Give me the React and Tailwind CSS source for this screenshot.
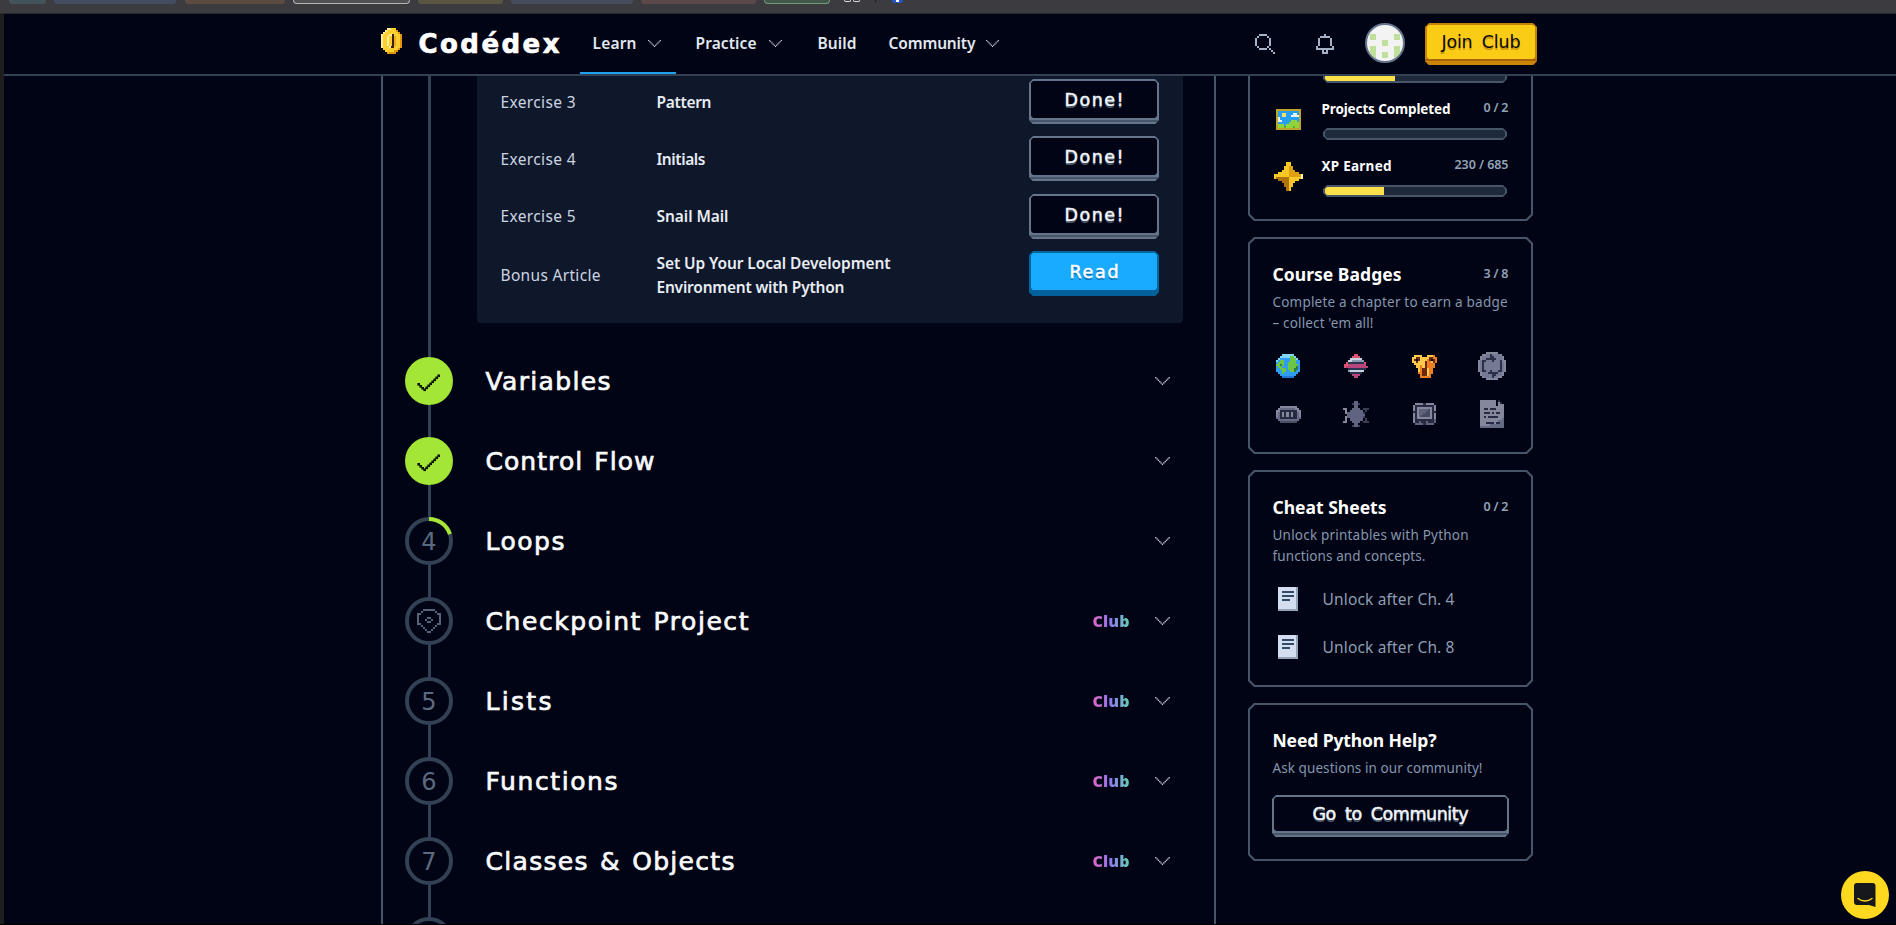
import { useLayoutEffect, useRef } from "react";

/* Text set to a fixed measure: tracking is computed so the line fills `w` pixels. */
function Fit({ w, className = "", children }) {
  const ref = useRef(null);
  useLayoutEffect(() => {
    const el = ref.current;
    const natural = el.getBoundingClientRect().width;
    el.style.letterSpacing = (w - 1 - natural) / Math.max(1, el.textContent.length - 1) + "px";
  }, [w]);
  return (
    <span className={"block shrink-0 " + className} style={{ width: w }}>
      <span ref={ref} className="ml-[0.5px] inline-block whitespace-nowrap">
        {children}
      </span>
    </span>
  );
}

/* Sprite drawn from rows of palette characters. */
function Sprite({ rows, colors, w, h, className = "" }) {
  const cols = rows[0].length;
  return (
    <svg
      width={w}
      height={h}
      viewBox={`0 0 ${cols} ${rows.length}`}
      preserveAspectRatio="none"
      shapeRendering="crispEdges"
      className={"block shrink-0 " + className}
    >
      {rows.flatMap((row, y) =>
        [...row].map((c, x) =>
          colors[c] ? <rect key={x + "-" + y} x={x} y={y} width="1" height="1" fill={colors[c]} /> : null
        )
      )}
    </svg>
  );
}

const COIN = [
  "...wwyyy...",
  "..wyyyyyo..",
  ".wyyyyyyyo.",
  "wyyywwkyyyo",
  "wyywyykbyyo",
  "wyywyykbyyo",
  "wyywyykbyyo",
  "wyywyykbyyo",
  "wyywyykbyyo",
  "wyyywkkyyyo",
  ".yyyyyyyyo.",
  "..yyyyyoo..",
  "...ooooo...",
];
const SEARCH = [
  "..####....",
  ".#....#...",
  "#......#..",
  "#......#..",
  "#......#..",
  "#......#..",
  ".#....#...",
  "..####.#..",
  "........#.",
  ".........#",
];
const BELL = [
  "....#....",
  "..#####..",
  ".#.....#.",
  ".#.....#.",
  ".#.....#.",
  ".#.....#.",
  "#.......#",
  "#########",
  "...#.#...",
  "...###...",
];
const PIN = [
  "...######...",
  "..#......#..",
  "##........##",
  "#..........#",
  "#....##....#",
  "#...#..#...#",
  "#....##....#",
  "##........##",
  "..#......#..",
  "...#....#...",
  "....#..#....",
  ".....##.....",
];
const PICTURE = [
  "gggggggggggg",
  "gbbbbbbbbbbg",
  "gbbyybbbwwbg",
  "gbbyybbwwwwg",
  "gwbbbbbbbbbg",
  "gwwbbbblllbg",
  "gbbbbblllllg",
  "glllbllllllg",
  "gllldllldllg",
  "gggggggggggg",
];
const STAR = [
  "......yy......",
  "......yy......",
  ".....yyoo.....",
  ".....yyoo.....",
  "....yyyooo....",
  "..yyyyyooooo..",
  "yyyyyyyoooooow",
  "yddddddyyyyyyw",
  "..dddddyyyyy..",
  "....dddyyy....",
  ".....ddyy.....",
  ".....ddyy.....",
  "......dy......",
  "......dy......",
];
const EARTH = [
  "...cccccc...",
  "..cccccggc..",
  ".cbbbbbgggc.",
  "cbggbbbgggbb",
  "bgggbbggggbb",
  "ggdgbbgggggb",
  "bggbbbggggdb",
  "bbgggbgggddb",
  "bbbggbbggdbb",
  ".bbgbbbbbbb.",
  "..bbbbbbbb..",
  "...uuuuuu...",
];
const PLANET = [
  ".....rr.....",
  "....rrrr....",
  "...wwwwww...",
  "..wwssssss..",
  ".rkkkkkkkkr.",
  "rrppppppppp.",
  "rppppppppppp",
  "..kkkkkkkkk.",
  "..swwwwwww..",
  "...kkkkkk...",
  "....pppp....",
  ".....pp.....",
];
const LION = [
  ".yyyy..yyyo.",
  "yykkyyyykkoo",
  "yk.kyyyok.ko",
  "yykyyykooyko",
  ".yyyyykoooo.",
  "..yyoykoooo.",
  "...yokkyoo..",
  "...yokkyoo..",
  "...ookkyoo..",
  "....okkyo...",
  "....ooooo...",
];
const LOOP = [
  "....gggggg....",
  "..ggsskssssg..",
  ".gsssskkssssg.",
  ".gsskkkkksssg.",
  "gskkssskssskgg",
  "gskssssssssksg",
  "gskssssssssksg",
  "gskssssssssksg",
  "gskssssssssksg",
  "gskksskssskksg",
  ".gssskkkkkssg.",
  ".gssssskksssg.",
  "..gsssskssgg..",
  "....gggggg....",
];
const LIST = [
  "..gggggggg..",
  ".gsssssssgg.",
  "ggkkkkkkkkgg",
  "gskgkgkgkksg",
  "gskgkgkgkksg",
  "sskkkkkkkkss",
  ".ssssssssss.",
  "..dddddddd..",
];
const TURTLE = [
  ".....ss.....",
  "....dssd....",
  ".....ss.....",
  "gg..ssss.ddd",
  ".g.ssssss.d.",
  ".gsssssssd..",
  "..ssssssss..",
  ".gsssssssd..",
  ".g.ssssss.d.",
  "gg..ssss.ddd",
  ".....ss.....",
  "....dssd....",
];
const CHIP = [
  ".ggggkgggg.",
  "gkkkkkkkkkg",
  "gkgggggggkg",
  "gkgssssdgkg",
  "kkgsssddgkk",
  "gkgssdddgkg",
  "gkgsddddgkg",
  "gkgggggggkg",
  "gkkkkkkkkks",
  "gkkskkskkks",
  ".sssskssss.",
];
const PAGE = [
  "gggggggg.k..",
  "gggggggg.gk.",
  "gggggggg.ggg",
  "gggggggggggg",
  "ggkkgkkkgggg",
  "gggggggggggg",
  "ggkkkgkgkkgg",
  "gggggggggggg",
  "ggkgkkkkkggg",
  "gggggggggggs",
  "gggggggggsss",
  "gggkkkkgkkss",
  "gggggsssssss",
  "ssssssssssss",
];

const muted = { g: "#85889d", s: "#666b85", d: "#4a4f68", k: "#262a42" };
const BADGES = [
  { rows: EARTH, w: 24, h: 24, colors: { c: "#7fd6f7", b: "#2f9df4", g: "#6cc644", d: "#2e7d46", u: "#1f78d8" } },
  {
    rows: PLANET, w: 24, h: 24,
    colors: { r: "#e0526f", p: "#b8457c", w: "#c9d3e0", s: "#8c9bb0", k: "#2c3350" },
  },
  { rows: LION, w: 25, h: 23, colors: { y: "#ffc94a", o: "#ef7d22", k: "#6b2a10" } },
  { rows: LOOP, w: 28, h: 28, colors: { g: "#85889d", s: "#757a94", k: "#2b2f47" } },
  { rows: LIST, w: 25, h: 17, colors: muted },
  { rows: TURTLE, w: 26, h: 26, colors: { ...muted, d: "#3b3f55", s: "#5f6480" } },
  { rows: CHIP, w: 23, h: 22, colors: { ...muted, s: "#5f647c", d: "#474c66" } },
  { rows: PAGE, w: 24, h: 28, colors: muted },
];

function Chevron({ w, h, className = "" }) {
  return (
    <svg width={w} height={h} viewBox="0 0 11 6" className={"block shrink-0 " + className} fill="currentColor">
      {[0, 1, 2, 3, 4, 5, 6, 7, 8, 9, 10].map((x) => (
        <rect key={x} x={x} y={x < 6 ? x : 10 - x} width="1" height="1" />
      ))}
    </svg>
  );
}

const CUT6 =
  "[clip-path:polygon(6px_0,calc(100%-6px)_0,100%_6px,100%_calc(100%-6px),calc(100%-6px)_100%,6px_100%,0_calc(100%-6px),0_6px)]";
const CUT5 =
  "[clip-path:polygon(5px_0,calc(100%-5px)_0,100%_5px,100%_calc(100%-5px),calc(100%-5px)_100%,5px_100%,0_calc(100%-5px),0_5px)]";
const CUT4 =
  "[clip-path:polygon(4px_0,calc(100%-4px)_0,100%_4px,100%_calc(100%-4px),calc(100%-4px)_100%,4px_100%,0_calc(100%-4px),0_4px)]";
const CUT2 =
  "[clip-path:polygon(2px_0,calc(100%-2px)_0,100%_2px,100%_calc(100%-2px),calc(100%-2px)_100%,2px_100%,0_calc(100%-2px),0_2px)]";

function Card({ className = "", inner = "", children }) {
  return (
    <section className={`flex w-[285px] shrink-0 bg-[#475569] p-[2px] ${CUT6} ${className}`}>
      <div className={`flex-1 bg-[#010414] px-[22px] ${CUT5} ${inner}`}>{children}</div>
    </section>
  );
}

const DISPLAY = "font-['DejaVu_Sans',sans-serif]";
const TONES = {
  dark: {
    frame: "bg-[#64748b]",
    face: "bg-[#010414] text-[#f1f5f9] [text-shadow:0_2px_0_#475569] [-webkit-text-stroke:0.5px_currentColor]",
    lip: "border-y-2 border-[#64748b] bg-[#475569]",
  },
  blue: {
    frame: "bg-[#05659f]",
    face: "bg-[#18abff] text-white [text-shadow:0_2px_0_#0b72b5] [-webkit-text-stroke:0.5px_currentColor]",
    lip: "bg-[#02619b]",
  },
  gold: {
    frame: "bg-[#c4820b]",
    face: "bg-[#facc15] text-[#0a0a0a] [text-shadow:0_2px_0_#c9930d]",
    lip: "border-t-2 border-[#a8640a] bg-[#cb8608]",
  },
};

function PixelButton({ tone, label, w, size }) {
  const t = TONES[tone];
  return (
    <button className={`flex shrink-0 flex-col ${t.frame} ${CUT4} ${size}`}>
      <span className={`mx-[2px] mt-[2px] flex flex-1 items-center justify-center self-stretch ${t.face} ${CUT2}`}>
        <Fit w={w} className={`text-left text-[17.5px] leading-[22px] [word-spacing:4px] ${DISPLAY}`}>
          {label}
        </Fit>
      </span>
      <span className={`block h-[6px] w-full shrink-0 ${t.lip}`} />
    </button>
  );
}

const NAV = [
  { label: "Learn", w: 45, box: "w-[96px] pl-[12px] gap-[11px]", menu: true, active: true },
  { label: "Practice", w: 62, box: "ml-[8px] w-[113px] pl-[11px] gap-[12px]", menu: true },
  { label: "Build", w: 40, box: "ml-[8px] w-[63px] pl-[12px]" },
  { label: "Community", w: 88, box: "ml-[8px] w-[130px] pl-[12px] gap-[10px]", menu: true },
];

function Header() {
  return (
    <header className="flex h-[62px] shrink-0 items-center border-b-2 border-[#334155] pl-[377px]">
      <Sprite
        rows={COIN} w={21} h={26} className="-mt-[6px]"
        colors={{ w: "#fff0a0", y: "#fdcf2f", o: "#e2960f", k: "#3a2308", b: "#f0a81c" }}
      />
      <Fit
        w={142}
        className={`ml-[16px] mr-px -mt-[1px] leading-[32px] text-white ${DISPLAY} text-[26px] font-bold [-webkit-text-stroke:0.7px_currentColor]`}
      >
        Codédex
      </Fit>
      <nav className="ml-[19px] flex h-full">
        {NAV.map((n) => (
          <a
            key={n.label}
            className={`flex h-full items-center border-b-2 text-[15.5px] font-semibold leading-[24px] text-[#e2e8f0] ${
              n.active ? "border-[#1ea5ee]" : "border-transparent"
            } ${n.box}`}
          >
            <Fit w={n.w}>{n.label}</Fit>
            {n.menu && <Chevron w={13} h={7} className="text-[#cbd5e1]" />}
          </a>
        ))}
      </nav>
      <Sprite rows={SEARCH} w={20} h={20} colors={{ "#": "#a5b1c4" }} className="ml-[249px]" />
      <Sprite rows={BELL} w={18} h={20} colors={{ "#": "#a5b1c4" }} className="ml-[41px]" />
      <div className="-mt-[2px] ml-[31px] flex size-[40px] items-center justify-center overflow-hidden rounded-full border-2 border-[#64748b] bg-[#f3f3f3]">
        <Sprite
          rows={[".....", "#...#", "..#..", "#...#", "#.#.#"]}
          w={30} h={30} colors={{ "#": "#bfe09b" }}
        />
      </div>
      <div className="ml-[20px]">
        <PixelButton tone="gold" label="Join Club" w={80} size="w-[112px] h-[42px]" />
      </div>
    </header>
  );
}

const EXERCISES = [
  { label: "Exercise 3", lw: 76, name: "Pattern", nw: 56, gap: "" },
  { label: "Exercise 4", lw: 76, name: "Initials", nw: 50, gap: "mt-[12px]" },
  { label: "Exercise 5", lw: 76, name: "Snail Mail", nw: 73, gap: "mt-[13px]", lift: "-mt-[2px]" },
];

function ExercisePanel() {
  return (
    <div className="ml-[24px] h-[247px] w-[706px] rounded-b-[4px] bg-[#0f172a] pl-[23px] pr-[24px] pt-[3px] text-[15.5px] leading-[24px]">
      {EXERCISES.map((e) => (
        <div key={e.label} className={`flex h-[45px] items-center ${e.gap}`}>
          <div className={`w-[156px] text-[#cbd5e1] ${e.lift || ""}`}><Fit w={e.lw}>{e.label}</Fit></div>
          <div className={`flex-1 font-semibold text-[#e8edf4] ${e.lift || ""}`}><Fit w={e.nw}>{e.name}</Fit></div>
          <PixelButton tone="dark" label="Done!" w={60} size="w-[130px] h-[45px]" />
        </div>
      ))}
      <div className="mt-[12px] flex h-[48px] items-start">
        <div className="w-[156px] self-center text-[#cbd5e1]"><Fit w={101}>Bonus Article</Fit></div>
        <div className="flex-1 font-semibold text-[#e8edf4]">
          <Fit w={235}>Set Up Your Local Development</Fit>
          <Fit w={189}>Environment with Python</Fit>
        </div>
        <PixelButton tone="blue" label="Read" w={50} size="w-[130px] h-[45px]" />
      </div>
    </div>
  );
}

function Check() {
  const dots = [[13, 26], [15, 28], [17, 30], [19, 31.5], [21, 29.5], [23, 27.5], [25, 25.5], [27, 23.5], [29, 21.5], [31, 19.5], [33, 17.5]];
  return (
    <svg width="48" height="48" viewBox="0 0 48 48" className="block" fill="#0a1408">
      {dots.map(([x, y]) => <rect key={x} x={x - 0.6} y={y} width="2.6" height="2.6" />)}
    </svg>
  );
}

const CHAPTERS = [
  { state: "done", title: "Variables", w: 126 },
  { state: "done", title: "Control Flow", w: 170 },
  { state: "part", mark: "4", title: "Loops", w: 80 },
  { state: "pin", title: "Checkpoint Project", w: 264, club: true },
  { state: "open", mark: "5", title: "Lists", w: 67, club: true },
  { state: "open", mark: "6", title: "Functions", w: 133, club: true },
  { state: "open", mark: "7", title: "Classes & Objects", w: 250, club: true },
  { state: "open", mark: "", title: "", w: 0 },
];

function Marker({ c }) {
  if (c.state === "done")
    return <div className="size-[48px] rounded-full bg-[#a3e635]"><Check /></div>;
  return (
    <div className="relative flex size-[48px] items-center justify-center rounded-full border-4 border-[#334155]">
      {c.state === "part" && (
        <svg width="48" height="48" viewBox="0 0 48 48" className="absolute -left-[4px] -top-[4px]">
          <path d="M24 2A22 22 0 0 1 44.9 17.2" fill="none" stroke="#a8e635" strokeWidth="4" />
        </svg>
      )}
      {c.state === "pin" ? (
        <Sprite rows={PIN} w={24} h={24} colors={{ "#": "#566479" }} />
      ) : (
        <span className={`pt-[2px] ${DISPLAY} text-[24px] leading-[24px] text-[#5c6a80]`}>{c.mark}</span>
      )}
    </div>
  );
}

function Chapter({ c }) {
  return (
    <div className="flex h-[80px] shrink-0 pl-[22px]">
      <div className="flex w-[48px] flex-col items-center">
        <Marker c={c} />
        <div className="w-[3px] flex-1 bg-[#334155]" />
      </div>
      <div className="flex h-[48px] flex-1 items-center pl-[32px] pr-[44px]">
        {c.title && (
          <>
            <Fit w={c.w} className={`mr-auto pt-[2px] leading-[32px] text-[#f8fafc] ${DISPLAY} text-[25px] [-webkit-text-stroke:0.7px_currentColor] [word-spacing:2px]`}>
              {c.title}
            </Fit>
            {c.club && (
              <Fit
                w={38}
                className="mr-[25px] bg-gradient-to-r from-[#e35fc0] via-[#8b7bf0] via-50% to-[#5fd0a8] bg-clip-text font-['Open_Sans','Lato',sans-serif] text-[16px] font-extrabold leading-[24px] text-transparent"
              >
                Club
              </Fit>
            )}
            <Chevron w={15} h={8} className="text-[#cbd5e1]" />
          </>
        )}
      </div>
    </div>
  );
}

function Progress({ title, w, count, cw, fill, icon, pad }) {
  return (
    <div className="flex h-[57px] shrink-0">
      <div className={`flex w-[32px] shrink-0 justify-center ${pad}`}>{icon}</div>
      <div className="ml-[17px] w-[188px]">
        <div className="flex h-[20px] justify-between">
          {title && (
            <>
              <Fit w={w} className="text-[13.5px] font-bold leading-[20px] text-white">{title}</Fit>
              <Fit w={cw} className="text-[12.5px] font-semibold leading-[18px] text-[#94a3b8]">{count}</Fit>
            </>
          )}
        </div>
        <div className={`ml-[2px] mt-[9px] h-[12px] w-[184px] bg-[#475569] px-[2px] py-[2px] ${CUT4}`}>
          <div className={`h-full bg-[#1e293b] ${CUT2}`}>
            <div className="h-full bg-[#fde047]" style={{ width: fill }} />
          </div>
        </div>
      </div>
    </div>
  );
}

function CardHead({ title, w, count }) {
  return (
    <div className="flex justify-between">
      <Fit w={w} className="text-[17.5px] font-bold leading-[25px] text-white">{title}</Fit>
      {count && (
        <Fit w={26} className="text-[12.5px] font-semibold leading-[24px] text-[#94a3b8]">
          {count}
        </Fit>
      )}
    </div>
  );
}

function Lines({ items }) {
  return (
    <div className="mt-[5px] text-[13.5px] leading-[21px] text-[#8596ad]">
      {items.map(([text, w]) => <Fit key={text} w={w}>{text}</Fit>)}
    </div>
  );
}

function SheetIcon() {
  return (
    <svg width="20" height="24" viewBox="0 0 20 24" shapeRendering="crispEdges" className="block">
      <path d="M0 0H20V24H0z" fill="#94a3b8" />
      <path d="M0 0H18V22H0z" fill="#d3dff0" />
      <path d="M4 4h12v2H4zM4 8h12v2H4zM4 12h8v2H4z" fill="#334a66" />
    </svg>
  );
}

function Sidebar() {
  return (
    <aside className="ml-[32px] flex w-[285px] flex-col">
      <Card className="-mt-[56px] h-[201px]" inner="pt-[20px]">
        <Progress fill="70px" pad="" icon={null} />
        <Progress
          title="Projects Completed" w={130} count="0 / 2" cw={26} fill="0px" pad="pt-[10px]"
          icon={<Sprite rows={PICTURE} w={25} h={21} colors={{ g: "#c0a32a", b: "#279ff0", y: "#f5df6a", w: "#e8f4fb", l: "#8ed43a", d: "#5fae2b" }} />}
        />
        <Progress
          title="XP Earned" w={71} count="230 / 685" cw={55} fill="59px" pad="pt-[6px]"
          icon={<Sprite rows={STAR} w={29} h={29} colors={{ w: "#fff3b5", y: "#f8c926", o: "#dfa014", d: "#b0720c" }} />}
        />
      </Card>

      <Card className="mt-[16px] h-[217px]" inner="pt-[23px]">
        <CardHead title="Course Badges" w={130} count="3 / 8" />
        <Lines items={[["Complete a chapter to earn a badge", 236], ["– collect 'em all!", 102]]} />
        <div className="mt-[16px] grid w-[236px] grid-cols-[repeat(4,32px)] justify-between gap-y-[16px]">
          {BADGES.map((b, i) => (
            <div key={i} className="flex size-[32px] items-center justify-center">
              <Sprite {...b} />
            </div>
          ))}
        </div>
      </Card>

      <Card className="mt-[16px] h-[217px]" inner="pt-[23px]">
        <CardHead title="Cheat Sheets" w={115} count="0 / 2" />
        <Lines items={[["Unlock printables with Python", 197], ["functions and concepts.", 154]]} />
        <div className="mt-[16px] flex flex-col gap-[16px]">
          {["Unlock after Ch. 4", "Unlock after Ch. 8"].map((t) => (
            <div key={t} className="flex h-[32px] items-center pl-[6px] text-[15.5px] leading-[24px] text-[#8e9db3]">
              <SheetIcon />
              <Fit w={133} className="ml-[24px]">{t}</Fit>
            </div>
          ))}
        </div>
      </Card>

      <Card className="mt-[16px] h-[158px]" inner="pt-[23px]">
        <CardHead title="Need Python Help?" w={165} />
        <Lines items={[["Ask questions in our community!", 211]]} />
        <div className="mt-[16px]">
          <PixelButton tone="dark" label="Go to Community" w={157} size="w-[237px] h-[42px]" />
        </div>
      </Card>
    </aside>
  );
}

function BookmarkStrip() {
  return (
    <div className="flex h-[14px] shrink-0 items-start overflow-hidden border-b border-[#29292c] bg-[#3c3b3f] pl-[9px]">
      <div className="h-[4px] w-[37px] rounded-b-[3px] bg-[#43535a]" />
      <div className="ml-[8px] h-[4px] w-[122px] rounded-b-[3px] bg-[#444d5f]" />
      <div className="ml-[9px] h-[4px] w-[100px] rounded-b-[3px] bg-[#5d4b42]" />
      <div className="ml-[8px] h-[4px] w-[117px] rounded-b-[4px] border border-t-0 border-[#b5b5b5] bg-[#4f5052]" />
      <div className="ml-[8px] h-[4px] w-[85px] rounded-b-[3px] bg-[#5a5542]" />
      <div className="ml-[8px] h-[4px] w-[122px] rounded-b-[3px] bg-[#454d5d]" />
      <div className="ml-[8px] h-[4px] w-[115px] rounded-b-[3px] bg-[#5c4848]" />
      <div className="ml-[8px] h-[4px] w-[66px] rounded-b-[4px] border border-t-0 border-[#6f9c79] bg-[#425548]" />
      <div className="ml-[14px] h-[2px] w-[7px] rounded-b-[2px] border border-t-0 border-[#dcdcdc]" />
      <div className="ml-[2px] h-[2px] w-[7px] rounded-b-[2px] border border-t-0 border-[#dcdcdc]" />
      <div className="ml-[15px] h-[2px] w-px bg-[#202022]" />
      <div className="ml-[16px] flex h-[3px] w-[11px] justify-center rounded-b-[5px] bg-[#2457c5]">
        <div className="h-[2px] w-[3px] bg-white" />
      </div>
    </div>
  );
}

export default function App() {
  return (
    <div className="relative flex h-[925px] w-[1896px] flex-col overflow-hidden bg-[#010414] font-['Noto_Sans','Lato',sans-serif]">
      <BookmarkStrip />
      <div className="flex min-h-0 flex-1 border-l-4 border-[#1e1e20]">
        <div className="flex min-w-0 flex-1 flex-col">
          <Header />
          <div className="flex min-h-0 flex-1 overflow-hidden pl-[377px]">
            <main className="flex w-[835px] shrink-0 flex-col border-x-2 border-[#475569]">
              <div className="flex h-[281px] shrink-0 pl-[22px]">
                <div className="flex w-[48px] justify-center">
                  <div className="w-[3px] bg-[#334155]" />
                </div>
                <ExercisePanel />
              </div>
              {CHAPTERS.map((c, i) => <Chapter key={i} c={c} />)}
            </main>
            <Sidebar />
          </div>
        </div>
      </div>
      <button className="absolute bottom-[6px] right-[7px] flex size-[48px] items-center justify-center rounded-full bg-[#ffd91f]">
        <svg width="22" height="24" viewBox="0 0 22 24" className="block">
          <path d="M3 0H18.500a3 3 0 0 1 3 3V24L15 22H3a3 3 0 0 1-3-3V3a3 3 0 0 1 3-3z" fill="#16181c" />
          <path d="M4 15.500c4 3.300 10 3.300 14 0" fill="none" stroke="#ffd91f" strokeWidth="1.400" strokeLinecap="round" />
        </svg>
      </button>
      <div className="absolute inset-x-0 bottom-0 h-px bg-black" />
    </div>
  );
}
